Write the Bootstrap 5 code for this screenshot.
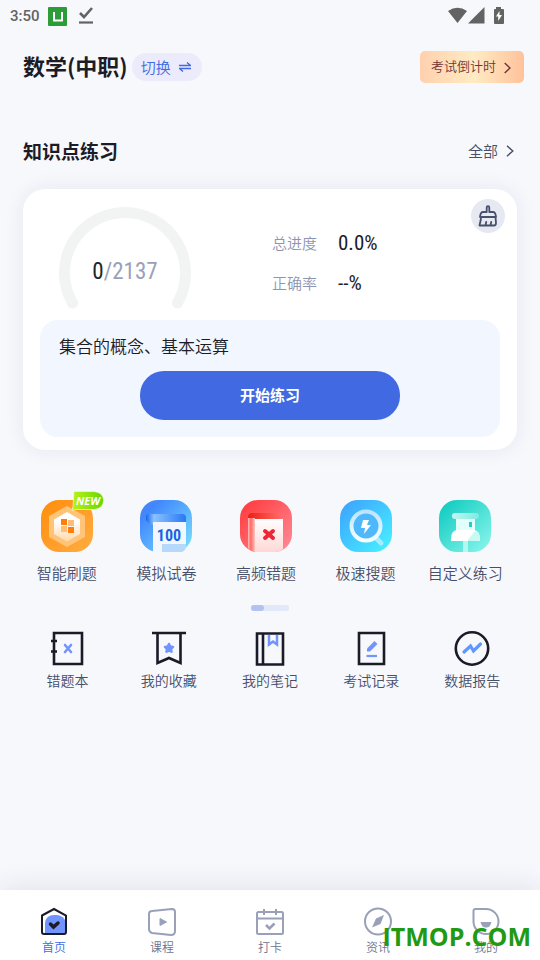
<!DOCTYPE html>
<html lang="zh-CN">
<head>
<meta charset="utf-8">
<meta name="viewport" content="width=device-width, initial-scale=1">
<title>数学(中职)</title>
<link rel="stylesheet" href="https://cdn.jsdelivr.net/npm/bootstrap@5.3.0/dist/css/bootstrap.min.css">
<style>
:root{--ink:#1c1c28;--slate:#474f69;--mist:#99a0b8;--brand:#4169e1}
body{background:#f7f8fc;color:var(--ink);font-family:"Noto Sans CJK SC",sans-serif;font-size:15px;font-weight:350;line-height:20px}
svg{display:block;flex:none}
a{color:inherit;text-decoration:none}
.statusbar{height:32px;padding:0 35px 0 10px;color:#636363;font:500 15px/32px Roboto,sans-serif}
.topbar{padding:19px 16px 0 23px}
.subject{font-size:22px;line-height:28px;font-weight:700}
.switcher{height:28px;padding:0 11px 0 9px;background:#ebebfb;color:var(--brand);font-size:15px;font-weight:350}
.countdown{height:32px;padding:0 13px 2px 11px;border-radius:5px;color:#6f3439;font-size:13px;font-weight:350;background:linear-gradient(90deg,#ffd0ae,#ffebc3 52%,#ffc29b)}
.section-head{padding:52px 26px 0 23px}
.section-title{font-size:19px;line-height:32px;font-weight:700}
.all-link{color:var(--slate)}
.practice{margin:22px 23px 0;padding:10px 12px 13px 17px;border-radius:22px;background:#fff;box-shadow:0 0 20px rgba(30,40,80,.08)}
.summary{padding:7px 0 0 18px}
.dial{display:grid;width:134px}
.dial>*{grid-area:1/1}
.tally{place-self:center;padding-top:28px;font:23px/30px "Roboto Condensed","Liberation Sans Narrow",sans-serif;color:var(--mist)}
.stats{display:grid;grid-template-columns:66px auto;align-content:start;row-gap:10px;padding:22px 0 0 80px;margin:0}
.stats dt{font-weight:350;line-height:30px;color:#8e95b0}
.stats dd{margin:0;font:21px/30px "Roboto Condensed","Liberation Sans Narrow",sans-serif}
.sweep{width:34px;height:34px;background:#e6e9f2}
.chapter{margin:10px 5px 0 0;padding:14px 19px 17px;border-radius:18px;background:#f2f6ff}
.chapter-name{font-size:17px;line-height:24px}
.start{width:260px;height:49px;margin-top:13px;border-radius:24px;background:var(--brand);color:#fff;font-size:15px;font-weight:700}
.start:hover{background:#3559c9;color:#fff}
.tools{padding:50px 25px 0 17px;color:var(--slate)}
.tool-text{padding-top:11px}
.tile{position:relative}
.new-tag{position:absolute;left:30px;top:-9px}
.pager{width:38px;height:6px;margin:22px 0 0;background:#e1e8f8}
.pager span{display:block;width:13px;height:6px;background:#b3c2f2}
.shelf{padding:19px 17px 0;color:var(--slate);font-size:14px}
.shelf-text{padding-top:4px}
.tabbar{position:relative;padding:15px 0 6px;background:#fff;color:#6c7592;font-size:12px;line-height:15px;box-shadow:0 0 30px rgba(30,40,80,.12)}
.tabbar .current{color:var(--brand)}
.site-mark{position:absolute;right:9px;bottom:7px;color:#219a12;font:700 25px/34px "Open Sans",sans-serif}
</style>
<script src="https://cdn.jsdelivr.net/npm/bootstrap@5.3.0/dist/js/bootstrap.bundle.min.js"></script>
</head>
<body class="min-vh-100 d-flex flex-column">
<div class="statusbar d-flex align-items-center">
  <span>3:50</span>
  <svg class="ms-2" width="19" height="19" viewBox="0 0 19 19"><rect width="19" height="19" rx="1" fill="#2b9c38"/><path d="M6 5v8.500h8V5" fill="none" stroke="#fff" stroke-width="2"/></svg>
  <svg class="ms-2" width="22" height="20" viewBox="0 0 22 20" fill="none" stroke="#636363"><path d="M5 7l4 4 8-9" stroke-width="2.600"/><path d="M4 16.500h14" stroke-width="2.200"/></svg>
  <svg class="ms-auto" width="57" height="18" viewBox="0 0 57 18" fill="#636363"><path d="M0 4Q9.500-2.500 19 4L9.500 16ZM20 16.500 36.500 0V16.500ZM48 0h5v2h2a1 1 0 0 1 1 1v13q0 1-1 1h-8q-1 0-1-1V3q0-1 1-1h1Z"/><path d="M51.500 4 48 9.500h2.200V14l3.800-6h-2.500z" fill="#fff"/></svg>
</div>
<header class="topbar d-flex align-items-center">
  <h1 class="subject m-0 pb-1">数学(中职)</h1>
  <button class="switcher btn border-0 rounded-pill d-flex align-items-center ms-1" type="button">切换
    <svg class="ms-2" width="12" height="10" viewBox="0 0 12 10" fill="none" stroke="#4169e1" stroke-width="1.300"><path d="M0 3.500h11.500L8 .5M12 6.500H.5L4 9.500"/></svg>
  </button>
  <button class="countdown btn border-0 d-flex align-items-center ms-auto" type="button">考试倒计时
    <svg class="ms-2 mt-1" width="7" height="12" viewBox="0 0 7 12" fill="none" stroke="#6f3439" stroke-width="1.400"><path d="M.7 1 6 6 .7 11"/></svg>
  </button>
</header>
<main>
  <div class="section-head d-flex align-items-center justify-content-between">
    <h2 class="section-title m-0">知识点练习</h2>
    <a class="all-link d-flex align-items-center" href="#">全部
      <svg class="ms-2" width="8" height="12" viewBox="0 0 8 12" fill="none" stroke="#474f69" stroke-width="1.400"><path d="M1 .8 6.800 6 1 11.200"/></svg></a>
  </div>
  <section class="practice">
    <div class="d-flex align-items-start">
      <div class="summary d-flex">
        <div class="dial">
          <svg width="134" height="104" viewBox="0 0 134 104"><path d="M14.500 97A60.500 60.500 0 1 1 119.500 97" fill="none" stroke="#f1f4f3" stroke-width="11" stroke-linecap="round"/></svg>
          <div class="tally"><span class="text-dark">0</span>/2137</div>
        </div>
        <dl class="stats"><dt>总进度</dt><dd>0.0%</dd><dt>正确率</dt><dd>--%</dd></dl>
      </div>
      <button class="sweep btn border-0 rounded-circle p-0 d-flex align-items-center justify-content-center ms-auto" type="button" aria-label="清空记录">
        <svg width="20" height="22" viewBox="0 0 20 22" fill="none" stroke="#475069" stroke-width="1.800" stroke-linecap="round" stroke-linejoin="round"><path d="M8.700 7V2.500a1.300 1.300 0 0 1 2.600 0V7H15q2.500 0 3 5H2q.5-5 3-5ZM3 12c0 4-1 5-1.500 8.500H16q2 0 2-2.500l-.5-6M7.500 20.500l.7-3.500M12.500 20.500l.7-3.500"/></svg>
      </button>
    </div>
    <div class="chapter">
      <div class="chapter-name">集合的概念、基本运算</div>
      <button class="start btn border-0 d-block mx-auto p-0" type="button">开始练习</button>
    </div>
  </section>
  <nav class="tools row row-cols-5 g-0 text-center" aria-label="练习工具">
    <a class="col d-flex flex-column align-items-center" href="#">
      <span class="tile"><svg width="52" height="52" viewBox="0 0 52 52"><defs><linearGradient id="orangeBg" x2="1" y2="1"><stop stop-color="#ff8d0b"/><stop offset="1" stop-color="#ffad43"/></linearGradient><linearGradient id="hexFill" x2="0" y2="1"><stop offset=".3" stop-color="#fff"/><stop offset="1" stop-color="#ffd9a8"/></linearGradient></defs><rect width="52" height="52" rx="18" fill="url(#orangeBg)"/><path d="M26 6 44 16v21L26 47 8 37V16Z" fill="#ffc477"/><path d="M26 12 39 19.500v14.500L26 41.500 13 34V19.500Z" fill="url(#hexFill)"/><path d="M20 19h6v6h-6zM27 27h6v6h-6z" fill="#ff7d0b"/><path d="M27 20h6v6h-6zM20 26h6v6h-6z" fill="#ffbd7a"/></svg>
      <svg class="new-tag" width="33" height="20" viewBox="0 0 33 20"><defs><linearGradient id="tagFill" x2="1"><stop stop-color="#b8f218"/><stop offset="1" stop-color="#69d700"/></linearGradient></defs><path d="M3 .5h20q9.500 1 9.500 9t-9.500 9H4l-3 1 1-4Z" fill="url(#tagFill)" stroke="#e9ffc4" stroke-width=".7"/><text x="17" y="14" text-anchor="middle" fill="#fff" font-family="Open Sans, sans-serif" font-size="11" font-weight="700" font-style="italic">NEW</text></svg></span>
      <span class="tool-text">智能刷题</span></a>
    <a class="col d-flex flex-column align-items-center" href="#">
      <svg width="52" height="52" viewBox="0 0 52 52"><defs><linearGradient id="blueBg" x2="1" y2="1"><stop offset=".2" stop-color="#4288fc"/><stop offset="1" stop-color="#7be4ff"/></linearGradient><linearGradient id="rollFill" x2="1"><stop stop-color="#1765e8"/><stop offset=".2" stop-color="#8bc2ff"/><stop offset="1" stop-color="#2877f5"/></linearGradient></defs><rect width="52" height="52" rx="18" fill="url(#blueBg)"/><path d="M13 20h33v24H25l-3 8h-9z" fill="#f2f7ff"/><path d="M22 44h24v3q0 3-4 5H22Z" fill="#b6d9fb"/><path d="M9 14h33q4 0 4 4v4H13v3q-4 0-7-5v-3q0-3 3-3Z" fill="url(#rollFill)"/><text x="29" y="41" text-anchor="middle" fill="#1763e6" font-family="Roboto Condensed, Roboto, sans-serif" font-size="16" font-weight="700">100</text></svg>
      <span class="tool-text">模拟试卷</span></a>
    <a class="col d-flex flex-column align-items-center" href="#">
      <svg width="52" height="52" viewBox="0 0 52 52"><defs><linearGradient id="redBg" x2="1" y2="1"><stop offset=".15" stop-color="#ff4446"/><stop offset="1" stop-color="#ff8d9b"/></linearGradient><linearGradient id="pageFill" x2="0" y2="1"><stop stop-color="#fff"/><stop offset="1" stop-color="#ffd8d5"/></linearGradient><linearGradient id="spineFill" x2="1"><stop stop-color="#ffc3bd"/><stop offset=".4" stop-color="#ff6965"/><stop offset="1" stop-color="#ffc6c0"/></linearGradient><linearGradient id="coverFill" x2="1"><stop stop-color="#ed2015"/><stop offset="1" stop-color="#ff6864"/></linearGradient></defs><rect width="52" height="52" rx="18" fill="url(#redBg)"/><path d="M8 17q0-4 4-4h28v7H15v32l-7-4Z" fill="url(#coverFill)"/><path d="M8 18h7v34q-5-1-7-4Z" fill="url(#spineFill)"/><path d="M15 19h28v30q-3 3-8 3H15Z" fill="url(#pageFill)"/><path d="m25 31 8 7m0-7-8 7" stroke="#ef2636" stroke-width="4" stroke-linecap="round"/></svg>
      <span class="tool-text">高频错题</span></a>
    <a class="col d-flex flex-column align-items-center" href="#">
      <svg width="52" height="52" viewBox="0 0 52 52"><defs><linearGradient id="skyBg" x2="1" y2="1"><stop offset=".1" stop-color="#3da8ff"/><stop offset="1" stop-color="#48f4ff"/></linearGradient><linearGradient id="lensFill" x2="0" y2="1"><stop stop-color="#bde4ff"/><stop offset="1" stop-color="#f7feff"/></linearGradient></defs><rect width="52" height="52" rx="18" fill="url(#skyBg)"/><path d="m36 38 5 5" stroke="#a5edff" stroke-width="5" stroke-linecap="round"/><circle cx="26" cy="26" r="14.500" fill="#4db9fb" stroke="url(#lensFill)" stroke-width="4"/><path d="M23 20h6l-2 5h4l-7 9 1-6h-4Z" fill="#fff"/></svg>
      <span class="tool-text">极速搜题</span></a>
    <a class="col d-flex flex-column align-items-center" href="#">
      <svg width="52" height="52" viewBox="0 0 52 52"><defs><linearGradient id="mintBg" x2="1" y2="1"><stop offset=".1" stop-color="#15cdc2"/><stop offset="1" stop-color="#8ef7ee"/></linearGradient><linearGradient id="capFill" x2="1"><stop stop-color="#c5f5ef"/><stop offset="1" stop-color="#7eeae1"/></linearGradient></defs><rect width="52" height="52" rx="18" fill="url(#mintBg)"/><path d="M17 18h19v13H17z" fill="#e2fffb"/><rect x="13" y="13" width="27" height="6" rx="3" fill="url(#capFill)"/><path d="M12 41v-2q0-9 7-9h16q6 1 6 9v2Z" fill="#fff"/><path d="m28 41 8-10q5 1 5 10Z" fill="#c8faf3"/><path d="M24 41h5v11h-5z" fill="#b4f8f0"/><path d="M30 22h3v5h-3z" fill="#22cfc3"/></svg>
      <span class="tool-text">自定义练习</span></a>
  </nav>
  <div class="pager rounded-pill mx-auto"><span class="rounded-pill"></span></div>
  <nav class="shelf row row-cols-5 g-0 text-center" aria-label="学习记录">
    <a class="col d-flex flex-column align-items-center" href="#"><svg width="36" height="36" viewBox="0 0 36 36" fill="none" stroke="#1b1b28" stroke-width="2.600"><path d="M4 3h28v31H4zM1 11h6M1 21.500h6"/><path d="m15 15 6 7m0-7-6 7" stroke="#7394ff" stroke-linecap="round"/></svg><span class="shelf-text">错题本</span></a>
    <a class="col d-flex flex-column align-items-center" href="#"><svg width="36" height="36" viewBox="0 0 36 36" fill="none" stroke="#1b1b28" stroke-width="2.600"><path d="M1 3h34M6.500 3v30L18 28l11.500 5V3"/><path d="m18 14 1.200 2.500 2.800.4-2 2 .5 2.800-2.500-1.200-2.500 1.200.5-2.800-2-2 2.800-.4Z" fill="#7394ff" stroke="#7394ff" stroke-width="2.500" stroke-linejoin="round"/></svg><span class="shelf-text">我的收藏</span></a>
    <a class="col d-flex flex-column align-items-center" href="#"><svg width="36" height="36" viewBox="0 0 36 36" fill="none" stroke="#1b1b28" stroke-width="2.600"><path d="M5 3.500h26v31H5zM11 3.500v31"/><path d="M17 5v9.500l4-3 4 3V5" stroke="#7394ff" stroke-width="2.500"/></svg><span class="shelf-text">我的笔记</span></a>
    <a class="col d-flex flex-column align-items-center" href="#"><svg width="36" height="36" viewBox="0 0 36 36" fill="none" stroke="#1b1b28" stroke-width="2.600"><path d="M6 3h25v31H6z"/><path d="m14 18.500 7.500-7.500 3 3-7.500 7.500h-3Z" fill="#7394ff" stroke="none"/><path d="M13.500 26h10.500" stroke="#7394ff" stroke-width="2.200"/></svg><span class="shelf-text">考试记录</span></a>
    <a class="col d-flex flex-column align-items-center" href="#"><svg width="36" height="36" viewBox="0 0 36 36" fill="none" stroke="#1b1b28" stroke-width="2.600"><circle cx="18" cy="18.500" r="16.200"/><path d="m10 22 6.500-6 3 5 7-7" stroke="#5e97ff" stroke-width="3.200" stroke-linecap="round"/></svg><span class="shelf-text">数据报告</span></a>
  </nav>
</main>
<nav class="tabbar mt-auto" aria-label="主导航">
  <div class="row row-cols-5 g-0 text-center">
    <a class="current col d-flex flex-column align-items-center" href="#" aria-current="page"><svg width="30" height="34" viewBox="0 0 30 34" fill="none"><path d="M6 29V18q1-8 9-8h3q7 1 9 7v12Z" fill="#7194ff"/><path d="M3 10.500 15 4l12 6.500V27q0 2-2 2H5q-2 0-2-2Z" stroke="#1b1b28" stroke-width="2"/><path d="m11.500 19 3 3 4.500-4" stroke="#1b1b28" stroke-width="3.500" stroke-linecap="round"/></svg><span>首页</span></a>
    <a class="col d-flex flex-column align-items-center" href="#"><svg width="30" height="34" viewBox="0 0 30 34"><path d="M5 6 25 4q3 0 3 3v19q0 4-4 4L5 28q-3-1-3-4V9q0-3 3-3Z" fill="none" stroke="#99a0b8" stroke-width="2"/><path d="M13 13.500v7l6.500-3.500Z" fill="#99a0b8" stroke="#99a0b8" stroke-linejoin="round"/></svg><span>课程</span></a>
    <a class="col d-flex flex-column align-items-center" href="#"><svg width="30" height="34" viewBox="0 0 30 34" fill="none" stroke="#99a0b8" stroke-width="2"><rect x="2" y="7" width="26" height="22" rx="1.500"/><path d="M2 13.500h26M9 4v6M21 4v6"/><path d="m11 20 3.500 3.500 5-5" stroke-width="2.600"/></svg><span>打卡</span></a>
    <a class="col d-flex flex-column align-items-center" href="#"><svg width="30" height="34" viewBox="0 0 30 34"><circle cx="15" cy="16.500" r="13" fill="none" stroke="#99a0b8" stroke-width="2"/><path d="m21 10-3.500 9-8.500 3.500 4-9Z" fill="#99a0b8"/></svg><span>资讯</span></a>
    <a class="col d-flex flex-column align-items-center" href="#"><svg width="30" height="34" viewBox="0 0 30 34"><path d="M2.500 6q0-2 2-2H15a12.500 12.500 0 1 1-12.500 12.500Z" fill="none" stroke="#99a0b8" stroke-width="2"/><path d="M9.500 17h11q-1 5.500-5.500 5.500T9.500 17Z" fill="#99a0b8"/></svg><span>我的</span></a>
  </div>
  <div class="site-mark pe-none">ITMOP.COM</div>
</nav>
</body>
</html>
